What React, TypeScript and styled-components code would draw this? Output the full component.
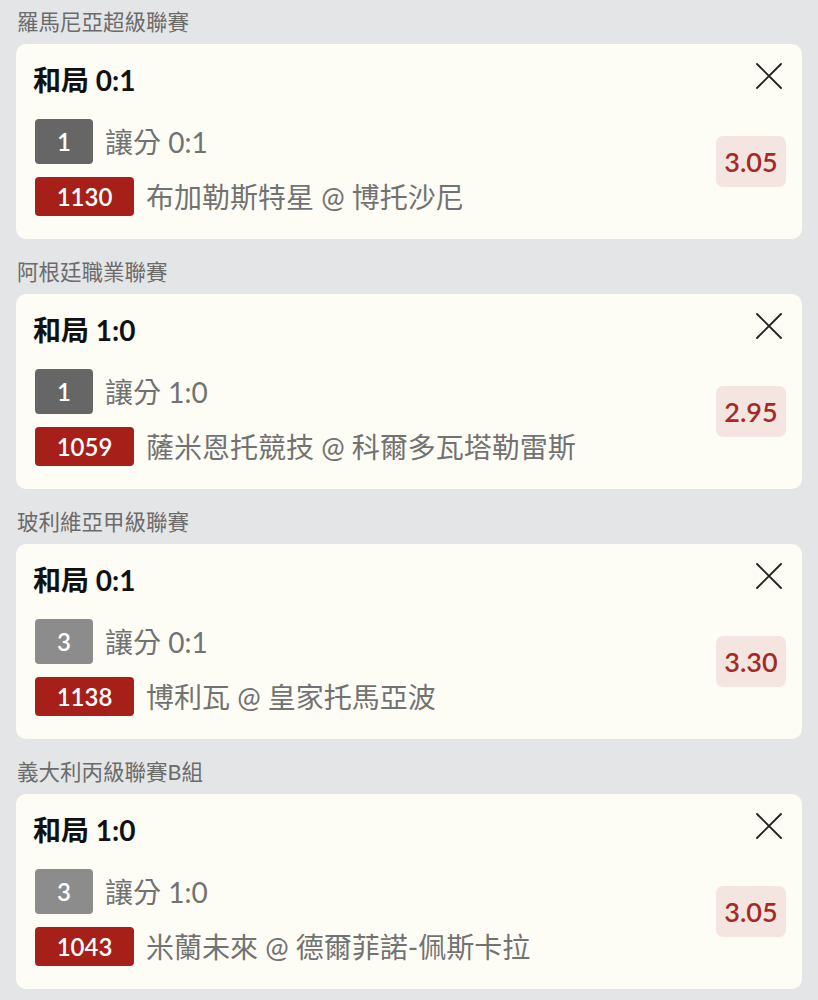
import React from "react";
import styled, { createGlobalStyle } from "styled-components";

const GlobalStyle = createGlobalStyle`
  html, body {
    margin: 0;
    padding: 0;
    background: #e4e5e7;
  }
  body {
    font-family: "Lato", "Noto Sans CJK TC", "Noto Sans", sans-serif;
  }
`;

const Page = styled.div`
  width: 818px;
  padding: 0 16px;
  box-sizing: border-box;
`;

const Section = styled.section`
  margin-bottom: 11px;
`;

const LeagueName = styled.div`
  height: 44px;
  line-height: 44px;
  padding-left: 1px;
  font-size: 21.5px;
  color: #6b6b6b;
`;

const Card = styled.div`
  background: #fdfdf6;
  border-radius: 10px;
  padding: 18px 16px 23px 19px;
`;

const CardHead = styled.div`
  display: flex;
  justify-content: space-between;
  align-items: flex-start;
`;

const Title = styled.div`
  font-size: 28px;
  line-height: 36px;
  font-weight: 700;
  color: #111;
  margin-left: -2px;
`;

const CloseButton = styled.button`
  border: none;
  background: none;
  padding: 0;
  margin: 1px 4px 0 0;
  width: 26px;
  height: 26px;
  display: flex;
  cursor: pointer;
`;

const Body = styled.div`
  display: flex;
  align-items: flex-start;
  margin-top: 21px;
`;

const Lines = styled.div`
  display: flex;
  flex-direction: column;
  gap: 13px;
`;

const Line = styled.div`
  display: flex;
  align-items: center;
  gap: 12px;
`;

const Badge = styled.span<{ $tone: "dark" | "light" | "red" }>`
  display: inline-flex;
  align-items: center;
  justify-content: center;
  box-sizing: border-box;
  height: ${(p) => (p.$tone === "red" ? 39 : 45)}px;
  width: ${(p) => (p.$tone === "red" ? 99 : 58)}px;
  border-radius: 4px;
  background: ${(p) =>
    p.$tone === "red" ? "#a71f19" : p.$tone === "dark" ? "#666666" : "#8c8c8c"};
  color: #fff;
  font-size: 24px;
  font-weight: 600;
`;

const LineText = styled.span`
  font-size: 28px;
  line-height: 36px;
  color: #727272;
  white-space: nowrap;
`;

const Price = styled.div`
  margin-left: auto;
  margin-top: 17px;
  width: 70px;
  height: 51px;
  border-radius: 7px;
  background: #f4e5e0;
  color: #a52a26;
  font-size: 27px;
  font-weight: 600;
  display: flex;
  align-items: center;
  justify-content: center;
`;

type Bet = {
  league: string;
  title: string;
  tag: string;
  tone: "dark" | "light";
  handicap: string;
  code: string;
  match: string;
  price: string;
};

const bets: Bet[] = [
  {
    league: "羅馬尼亞超級聯賽",
    title: "和局 0:1",
    tag: "1",
    tone: "dark",
    handicap: "讓分 0:1",
    code: "1130",
    match: "布加勒斯特星 @ 博托沙尼",
    price: "3.05",
  },
  {
    league: "阿根廷職業聯賽",
    title: "和局 1:0",
    tag: "1",
    tone: "dark",
    handicap: "讓分 1:0",
    code: "1059",
    match: "薩米恩托競技 @ 科爾多瓦塔勒雷斯",
    price: "2.95",
  },
  {
    league: "玻利維亞甲級聯賽",
    title: "和局 0:1",
    tag: "3",
    tone: "light",
    handicap: "讓分 0:1",
    code: "1138",
    match: "博利瓦 @ 皇家托馬亞波",
    price: "3.30",
  },
  {
    league: "義大利丙級聯賽B組",
    title: "和局 1:0",
    tag: "3",
    tone: "light",
    handicap: "讓分 1:0",
    code: "1043",
    match: "米蘭未來 @ 德爾菲諾-佩斯卡拉",
    price: "3.05",
  },
];

const CloseIcon = () => (
  <svg width="26" height="26" viewBox="0 0 26 26" fill="none">
    <path d="M1 1 L25 25 M25 1 L1 25" stroke="#222" strokeWidth="1.9" strokeLinecap="round" />
  </svg>
);

export default function App() {
  return (
    <>
      <GlobalStyle />
      <Page>
        {bets.map((b, i) => (
          <Section key={i}>
            <LeagueName>{b.league}</LeagueName>
            <Card>
              <CardHead>
                <Title>{b.title}</Title>
                <CloseButton aria-label="close">
                  <CloseIcon />
                </CloseButton>
              </CardHead>
              <Body>
                <Lines>
                  <Line>
                    <Badge $tone={b.tone}>{b.tag}</Badge>
                    <LineText>{b.handicap}</LineText>
                  </Line>
                  <Line>
                    <Badge $tone="red">{b.code}</Badge>
                    <LineText>{b.match}</LineText>
                  </Line>
                </Lines>
                <Price>{b.price}</Price>
              </Body>
            </Card>
          </Section>
        ))}
      </Page>
    </>
  );
}
